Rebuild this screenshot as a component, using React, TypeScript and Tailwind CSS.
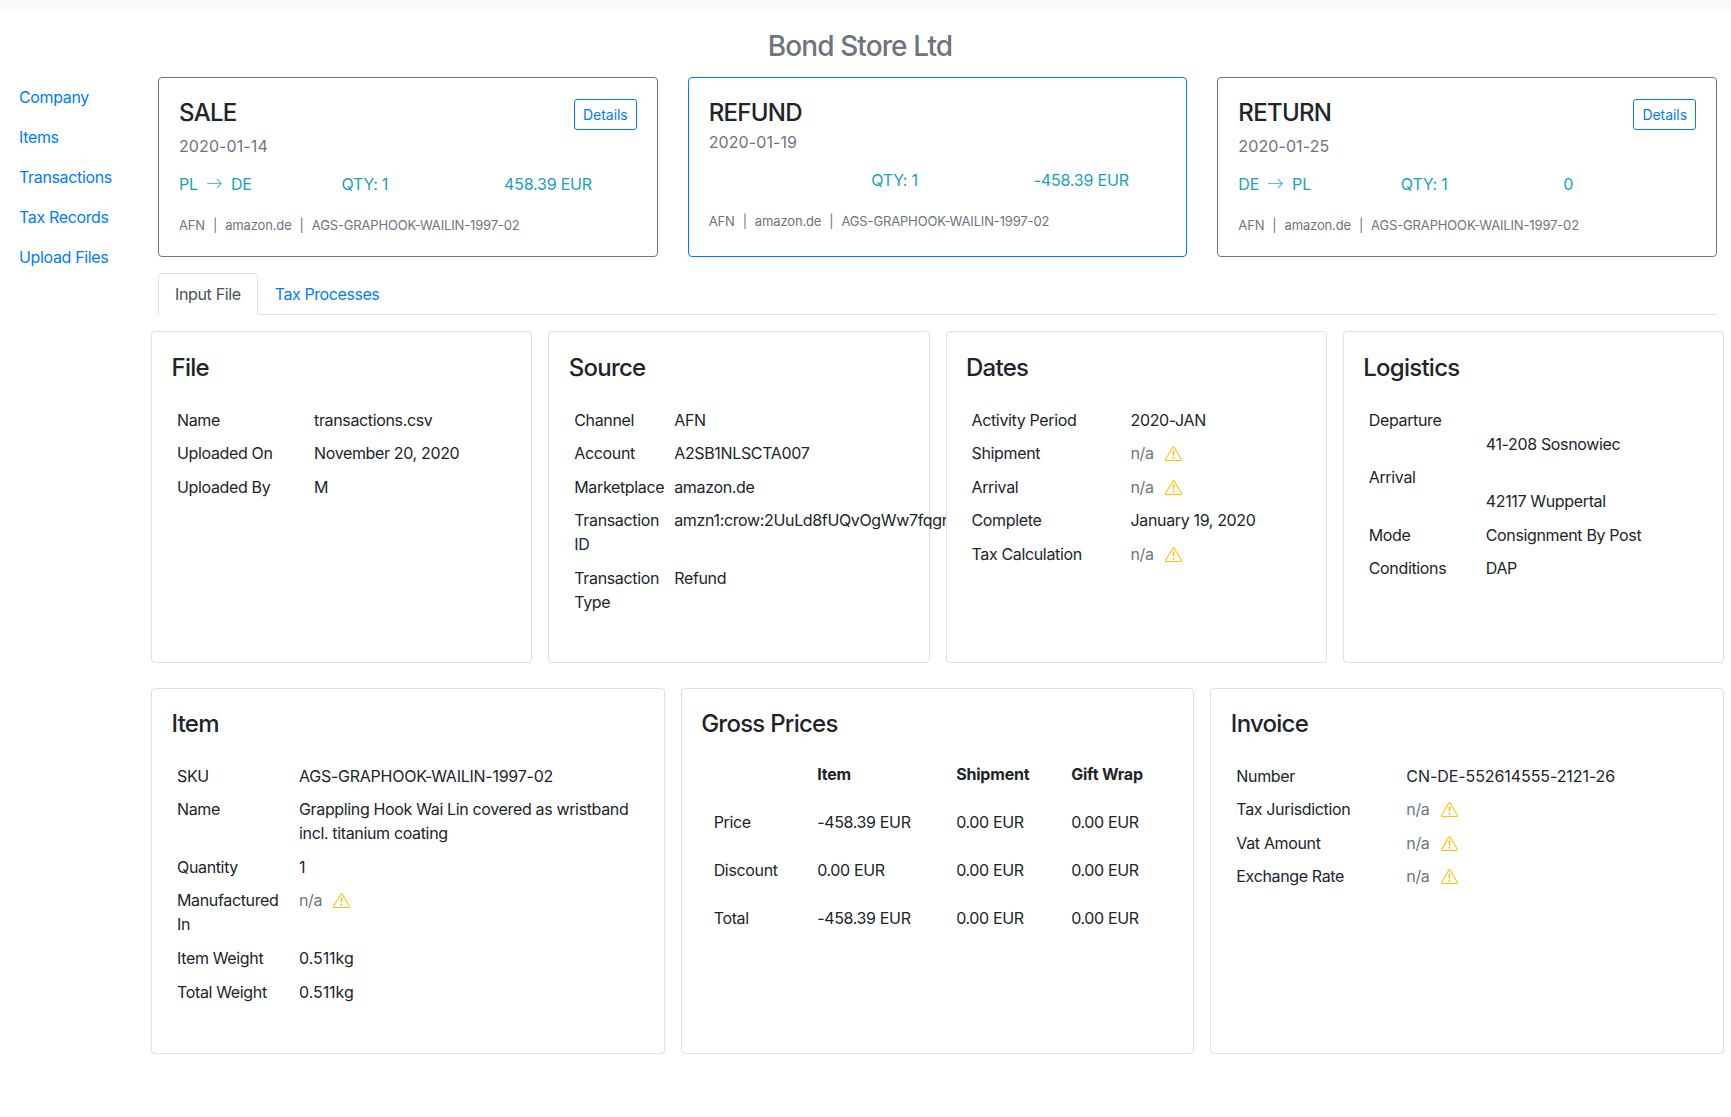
const font = "font-['Inter','Liberation_Sans',sans-serif] tracking-[-0.35px]";

function Warn() {
  return (
    <svg viewBox="0 0 16 16" className="ml-[11px] inline-block h-[17px] w-[17px] align-[-3px] text-[#ffc107]" fill="currentColor">
      <path d="M7.938 2.016A.13.13 0 0 1 8.002 2a.13.13 0 0 1 .063.016.146.146 0 0 1 .054.057l6.857 11.667c.036.06.035.124.002.183a.163.163 0 0 1-.054.06.116.116 0 0 1-.066.017H1.146a.115.115 0 0 1-.066-.017.163.163 0 0 1-.054-.06.176.176 0 0 1 .002-.183L7.884 2.073a.147.147 0 0 1 .054-.057zm1.044-.45a1.13 1.13 0 0 0-1.96 0L.165 13.233c-.457.778.091 1.767.98 1.767h13.713c.889 0 1.438-.99.98-1.767L8.982 1.566z" />
      <path d="M7.002 12a1 1 0 1 1 2 0 1 1 0 0 1-2 0zM7.1 5.995a.905.905 0 1 1 1.8 0l-.35 3.507a.552.552 0 0 1-1.1 0L7.1 5.995z" />
    </svg>
  );
}

function Na() {
  return (
    <span className="text-[#6c757d]">
      n/a
      <Warn />
    </span>
  );
}

function Route({ from, to }: { from: string; to: string }) {
  return (
    <span className="flex items-center">
      {from}
      <svg viewBox="0 0 16 16" className="mx-[8px] h-[17px] w-[17px] text-[#17a2b8] opacity-70" fill="currentColor">
        <path fillRule="evenodd" d="M1 8a.5.5 0 0 1 .5-.5h11.793l-3.147-3.146a.5.5 0 0 1 .708-.708l4 4a.5.5 0 0 1 0 .708l-4 4a.5.5 0 0 1-.708-.708L13.293 8.5H1.5A.5.5 0 0 1 1 8z" />
      </svg>
      {to}
    </span>
  );
}

type Sum = { title: string; date: string; route?: [string, string]; amount: string; active?: boolean; details?: boolean };

const summaries: Sum[] = [
  { title: "SALE", date: "2020-01-14", route: ["PL", "DE"], amount: "458.39 EUR", details: true },
  { title: "REFUND", date: "2020-01-19", amount: "-458.39 EUR", active: true },
  { title: "RETURN", date: "2020-01-25", route: ["DE", "PL"], amount: "0", details: true },
];

function SummaryCard({ s }: { s: Sum }) {
  return (
    <div className={`relative h-[180px] flex-1 rounded-[4px] border px-[20px] pt-[21px] ${s.active ? "border-[#007bff]" : "border-[#6c757d]"}`}>
      <h5 className="text-[24px] leading-[28.8px] font-medium tracking-[-0.7px] text-[#212529]">{s.title}</h5>
      {s.details && (
        <button className="absolute top-[21px] right-[20px] h-[31px] rounded-[3px] border border-[#007bff] px-[8px] text-[14px] tracking-[-0.05px] text-[#007bff]">Details</button>
      )}
      <div className={`text-[16px] leading-[24px] tracking-[0.1px] text-[#6c757d] ${s.details ? "mt-[6px]" : "mt-[2px]"}`}>{s.date}</div>
      <div className="mt-[14px] flex h-[24px] text-[16px] leading-[24px] tracking-[-0.2px] text-[#17a2b8]">
        <div className="w-[162.5px]">{s.route && <Route from={s.route[0]} to={s.route[1]} />}</div>
        <div className="w-[162.5px]">QTY: 1</div>
        <div>{s.amount}</div>
      </div>
      <div className="mt-[19px] flex gap-[8px] text-[13px] leading-[20px] tracking-[-0.15px] text-[#6c757d]">
        <span>AFN</span>
        <span>|</span>
        <span>amazon.de</span>
        <span>|</span>
        <span>AGS-GRAPHOOK-WAILIN-1997-02</span>
      </div>
    </div>
  );
}

function Panel({ title, pad, children }: { title: string; pad: string; children: React.ReactNode }) {
  return (
    <div className={`relative w-0 flex-1 rounded-[4px] border border-[#dfdfdf] bg-white px-[20px] ${pad}`}>
      <h5 className="-ml-[0.5px] text-[24px] leading-[28.8px] font-medium tracking-[-0.75px] text-[#212529]">{title}</h5>
      {children}
    </div>
  );
}

function Info({ rows, label }: { rows: [string, React.ReactNode][]; label: string }) {
  return (
    <table className="mt-[20px] border-collapse text-[16px] leading-[24px] text-[#212529]">
      <tbody>
        {rows.map(([k, v], i) => (
          <tr key={i}>
            <td className={`px-[5px] py-[4.8px] align-top ${label}`}>{k}</td>
            <td className="px-[5px] py-[4.8px] align-top whitespace-nowrap">{v}</td>
          </tr>
        ))}
      </tbody>
    </table>
  );
}

function Prices() {
  const rows = [
    ["Price", "-458.39 EUR", "0.00 EUR", "0.00 EUR"],
    ["Discount", "0.00 EUR", "0.00 EUR", "0.00 EUR"],
    ["Total", "-458.39 EUR", "0.00 EUR", "0.00 EUR"],
  ];
  return (
    <table className="mt-[11px] border-collapse text-[16px] leading-[24px] text-[#212529]">
      <thead>
        <tr className="h-[48px] text-left">
          <th className="w-[103.5px] px-[12px] py-[12px]" />
          <th className="w-[139px] px-[12px] py-[12px] font-bold tracking-[-0.2px]">Item</th>
          <th className="w-[115px] px-[12px] py-[12px] font-bold tracking-[-0.2px]">Shipment</th>
          <th className="px-[12px] py-[12px] font-bold tracking-[-0.2px]">Gift Wrap</th>
        </tr>
      </thead>
      <tbody>
        {rows.map((r) => (
          <tr key={r[0]}>
            {r.map((c, i) => (
              <td key={i} className="px-[12px] py-[12px]">{c}</td>
            ))}
          </tr>
        ))}
      </tbody>
    </table>
  );
}

export default function App() {
  return (
    <div className={`min-h-[1117px] bg-white ${font}`}>
      <div className="h-[11px] bg-[#f8f9fa]" />
      <h3 className="mt-[16px] pr-[11px] text-center text-[28px] leading-[38px] font-medium tracking-[-0.9px] text-[#6c757d]">Bond Store Ltd</h3>
      <div className="mt-[12px] flex">
        <nav className="flex w-[151px] shrink-0 flex-col gap-[16px] pt-[8px] pl-[19px] text-[16px] leading-[24px] text-[#007bff]">
          {["Company", "Items", "Transactions", "Tax Records", "Upload Files"].map((l) => (
            <a key={l} href="#">{l}</a>
          ))}
        </nav>
        <main className="flex w-[1573px] flex-col">
          <div className="flex gap-[30px] px-[7px]">
            {summaries.map((s) => (
              <SummaryCard key={s.title} s={s} />
            ))}
          </div>
          <div className="mx-[7px] mt-[16px] flex h-[42px] border-b border-[#dee2e6] text-[16px] leading-[24px]">
            <div className="h-[42px] rounded-t-[4px] border border-[#dee2e6] border-b-white px-[16px] py-[8px] text-[#495057]">Input File</div>
            <div className="py-[9px] pr-[16px] pl-[17px] tracking-[-0.42px] text-[#007bff]">Tax Processes</div>
          </div>
          <div className="mt-[16px] flex h-[332px] gap-[16px]">
            <Panel title="File" pad="pt-[22px]">
              <Info label="w-[137px]" rows={[["Name", "transactions.csv"], ["Uploaded On", "November 20, 2020"], ["Uploaded By", "M"]]} />
            </Panel>
            <Panel title="Source" pad="pt-[22px]">
              <Info label="w-[98px]" rows={[["Channel", "AFN"], ["Account", "A2SB1NLSCTA007"], ["Marketplace", "amazon.de"], ["Transaction ID", "amzn1:crow:2UuLd8fUQvOgWw7fqgr"], ["Transaction Type", "Refund"]]} />
            </Panel>
            <Panel title="Dates" pad="pt-[22px]">
              <Info label="w-[159px]" rows={[["Activity Period", "2020-JAN"], ["Shipment", <Na />], ["Arrival", <Na />], ["Complete", "January 19, 2020"], ["Tax Calculation", <Na />]]} />
            </Panel>
            <Panel title="Logistics" pad="pt-[22px]">
              <Info label="w-[117px]" rows={[["Departure", <div className="pt-[24px]">41-208 Sosnowiec</div>], ["Arrival", <div className="pt-[24px]">42117 Wuppertal</div>], ["Mode", "Consignment By Post"], ["Conditions", "DAP"]]} />
            </Panel>
          </div>
          <div className="mt-[25px] flex h-[366px] gap-[16px]">
            <Panel title="Item" pad="pt-[21px]">
              <Info label="w-[122px]" rows={[["SKU", <span className="tracking-[-0.25px]">AGS-GRAPHOOK-WAILIN-1997-02</span>], ["Name", <>Grappling Hook Wai Lin covered as wristband<br />incl. titanium coating</>], ["Quantity", "1"], ["Manufactured In", <Na />], ["Item Weight", <span className="tracking-[-0.05px]">0.511kg</span>], ["Total Weight", <span className="tracking-[-0.05px]">0.511kg</span>]]} />
            </Panel>
            <Panel title="Gross Prices" pad="pt-[21px]">
              <Prices />
            </Panel>
            <Panel title="Invoice" pad="pt-[21px]">
              <Info label="w-[170px]" rows={[["Number", <span className="tracking-[-0.08px]">CN-DE-552614555-2121-26</span>], ["Tax Jurisdiction", <Na />], ["Vat Amount", <Na />], ["Exchange Rate", <Na />]]} />
            </Panel>
          </div>
        </main>
      </div>
    </div>
  );
}
